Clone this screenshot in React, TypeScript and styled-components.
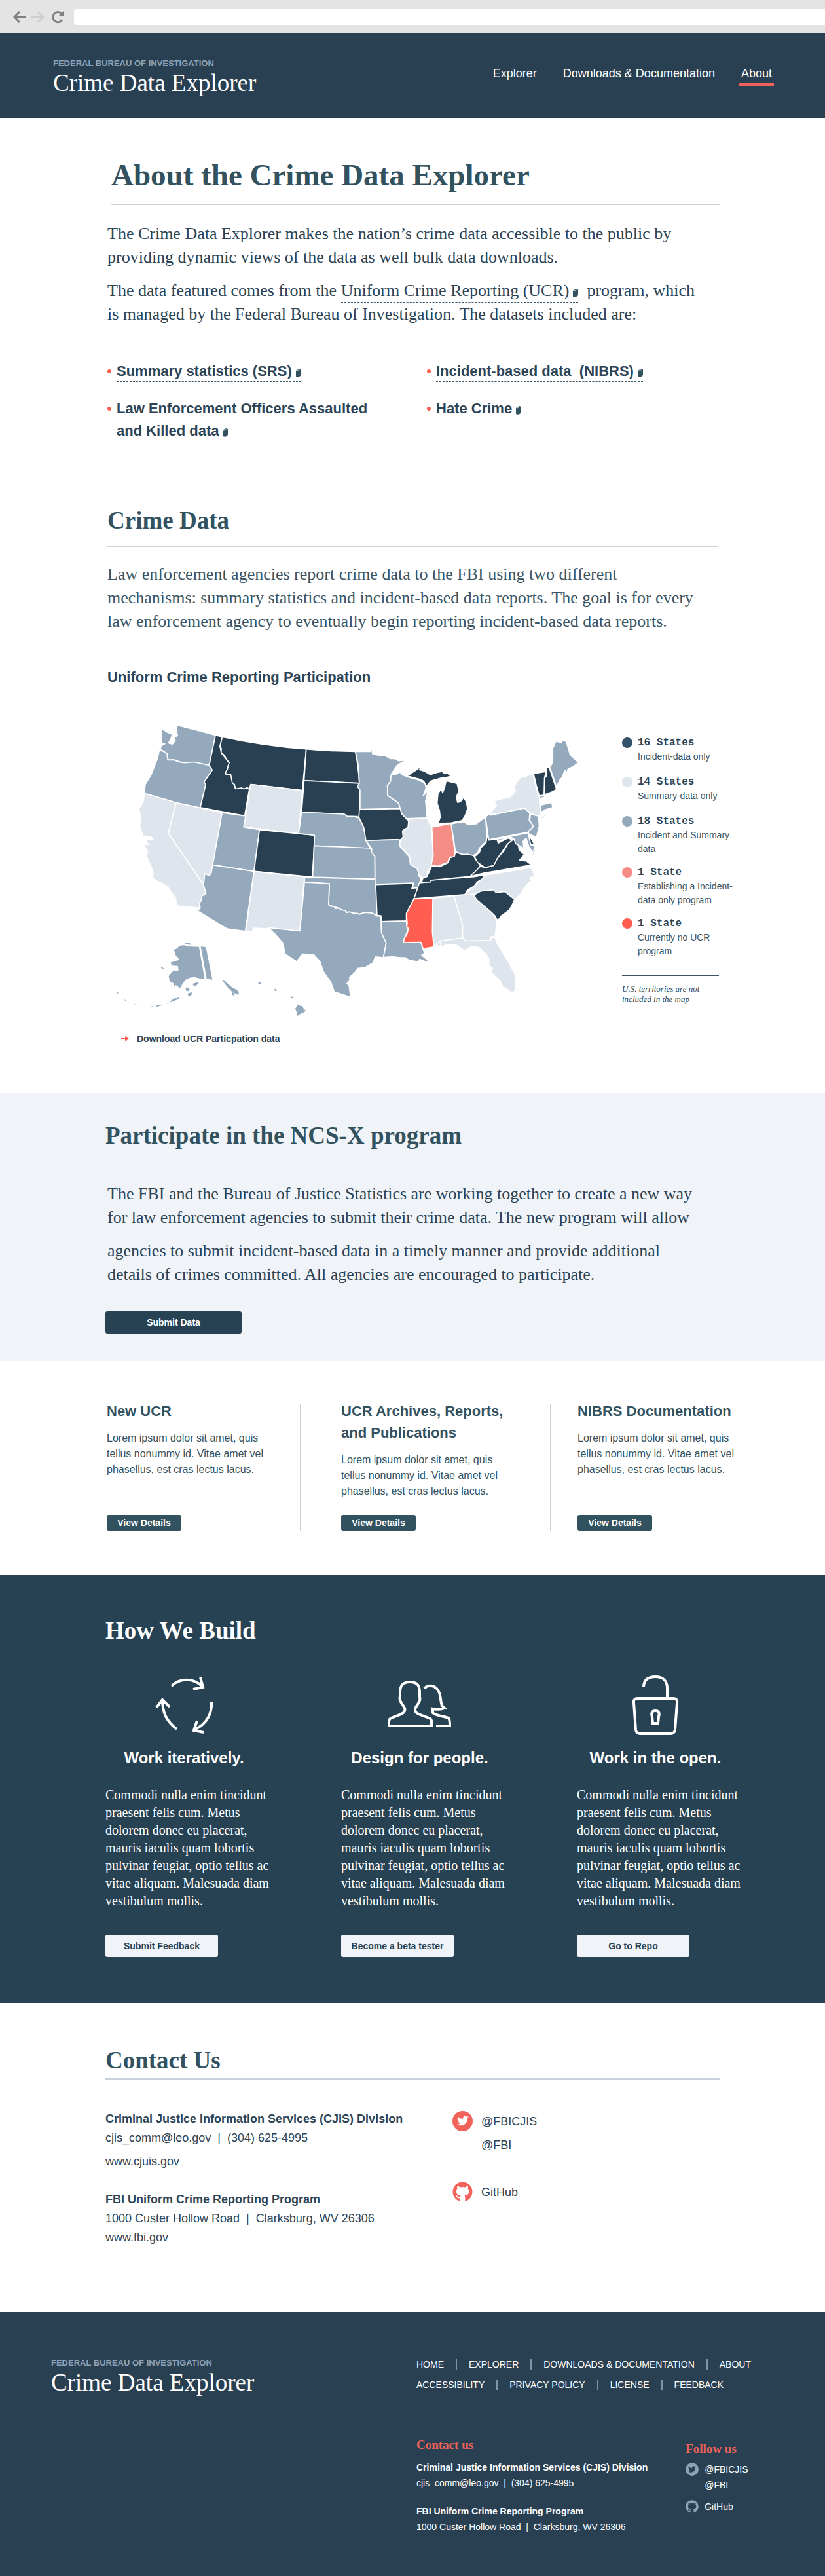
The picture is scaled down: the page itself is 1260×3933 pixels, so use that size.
import React from "react";
import styled, { createGlobalStyle } from "styled-components";
import { FaGithub, FaTwitter } from "react-icons/fa";

const color = {
  navy: "#294052",
  deep: "#264253",
  teal: "#33525f",
  ink: "#2c4456",
  mist: "#f0f3f8",
  rule: "#c9d2da",
  slate: "#95a9bd",
  pale: "#dfe5ed",
  coral: "#ff5e50",
  salmon: "#f38d86",
  accent: "#f0625a",
};

const sans = `"Liberation Sans", Arial, sans-serif`;
const serif = `"Liberation Serif", Georgia, serif`;
const mono = `"Liberation Mono", "Courier New", monospace`;

const GlobalStyle = createGlobalStyle`
  *, *::before, *::after { box-sizing: border-box; }
  body { margin: 0; background: #fff; color: ${color.ink}; font-family: ${sans}; }
  h1, h2, h3, h4, p, ul, figure, address { margin: 0; padding: 0; font-style: normal; }
  ul { list-style: none; }
  a { color: inherit; text-decoration: none; }
  svg { display: block; }
`;

/* Browser bar */
const Chrome = styled.div`
  display: flex;
  align-items: center;
  height: 51px;
  padding-left: 18px;
  background: #e4e4e4;
`;
const ChromeButton = styled.button<{ $faint?: boolean }>`
  display: flex;
  justify-content: center;
  width: 24px;
  padding: 0;
  margin-right: 4px;
  border: 0;
  background: none;
  color: ${(p) => (p.$faint ? "#cfcfcf" : "#808080")};
`;
const Reload = styled(ChromeButton)`
  margin: 0 13px 0 2px;
`;
const Address = styled.input`
  flex: 1;
  min-width: 0;
  height: 24px;
  padding: 0 8px;
  border: 0;
  border-radius: 4px 0 0 4px;
  background: #fff;
  font: 14px ${sans};
`;

/* Header */
const Header = styled.header`
  display: flex;
  justify-content: space-between;
  align-items: flex-start;
  height: 129px;
  padding: 38px 78px 0 81px;
  background: ${color.navy};
  color: #fff;
`;
const Eyebrow = styled.p`
  margin-bottom: 2px;
  color: #8fa3b8;
  font-size: 13px;
  font-weight: 700;
  line-height: 16px;
`;
const Wordmark = styled.a`
  display: block;
  font-family: ${serif};
  font-size: 37px;
  line-height: 40px;
`;
const Nav = styled.nav`
  display: flex;
  gap: 34px;
  margin-top: 11px;
`;
const NavLink = styled.a<{ $active?: boolean }>`
  padding: 0 3px 3px;
  border-bottom: 4px solid ${(p) => (p.$active ? color.accent : "transparent")};
  font-size: 18px;
  line-height: 24px;
`;

/* Shared layout and text */
const Section = styled.section<{ $top: number; $bottom: number; $bg?: string }>`
  padding: ${(p) => p.$top}px 20px ${(p) => p.$bottom}px;
  background: ${(p) => p.$bg ?? "transparent"};
`;
const Container = styled.div<{ $wide?: boolean }>`
  max-width: ${(p) => (p.$wide ? 938 : 932)}px;
  margin: 0 auto;
`;
const PageTitle = styled.h1`
  margin: 0 -4px 26px 6px;
  padding-bottom: 16px;
  border-bottom: 2px solid ${color.rule};
  color: ${color.teal};
  font: 700 47px/56px ${serif};
`;
const Heading = styled.h2<{ $line?: string; $pad?: number; $gap: number }>`
  margin-bottom: ${(p) => p.$gap}px;
  padding-bottom: ${(p) => p.$pad ?? 0}px;
  border-bottom: ${(p) => p.$line ?? "0"};
  color: ${color.teal};
  font: 700 37px/44px ${serif};
`;
const LightHeading = styled(Heading)`
  color: #fff;
`;
const Prose = styled.p<{ $tone?: string; $indent?: boolean }>`
  max-width: 920px;
  padding-left: ${(p) => (p.$indent ? 3 : 0)}px;
  color: ${(p) => p.$tone ?? color.ink};
  font: 26px/36px ${serif};
  & + & { margin-top: 15px; }
`;
const SmallHeading = styled.h3`
  margin: 52px 0 22px;
  color: ${color.ink};
  font-size: 22px;
  line-height: 30px;
`;
const DashedLink = styled.a`
  padding-bottom: 3px;
  border-bottom: 1px dashed #3b5568;
  svg { display: inline-block; margin-left: 6px; vertical-align: -2px; }
`;

const Datasets = styled.ul`
  display: grid;
  grid-template-columns: 488fr 444fr;
  row-gap: 23px;
  margin: 52px 0 98px;
  font-size: 22px;
  font-weight: 700;
  line-height: 34px;
`;
const Dataset = styled.li`
  display: flex;
  gap: 8px;
  max-width: 410px;
  &::before {
    content: "";
    flex: none;
    width: 6px;
    height: 6px;
    margin-top: 14px;
    border-radius: 50%;
    background: ${color.coral};
  }
`;

/* Map */
const Overhang = styled.div`
  margin-right: -34px;
`;
const MapLayout = styled(Overhang)`
  display: grid;
  grid-template-columns: minmax(0, 1fr) 180px;
  gap: 49px;
`;
const MapDrawing = styled.svg`
  width: 100%;
  height: auto;
  stroke: #fff;
  stroke-width: 5;
  stroke-linejoin: round;
`;
const Legend = styled.div`
  padding-top: 52px;
`;
const LegendList = styled.ul`
  display: flex;
  flex-direction: column;
  gap: 14px;
`;
const LegendItem = styled.li`
  display: flex;
  gap: 8px;
  min-height: 46px;
  font-size: 14px;
  line-height: 21px;
  color: #3b5564;
`;
const Dot = styled.span<{ $fill: string }>`
  flex: none;
  width: 16px;
  height: 16px;
  margin-top: 3px;
  border-radius: 50%;
  background: ${(p) => p.$fill};
`;
const Count = styled.strong`
  display: block;
  color: ${color.ink};
  font: 700 16px/22px ${mono};
`;
const LegendNote = styled.p`
  width: 148px;
  margin-top: 26px;
  padding-top: 12px;
  border-top: 1px solid #3b5568;
  font: italic 13px/16px ${serif};
`;
const Download = styled.a`
  display: inline-flex;
  align-items: center;
  gap: 12px;
  margin: 14px 0 0 21px;
  font-size: 14px;
  font-weight: 700;
  line-height: 20px;
`;

/* Buttons */
const Button = styled.button<{ $tone: "dark" | "teal" | "light" }>`
  width: ${(p) => ({ dark: 208, teal: 114, light: 172 })[p.$tone]}px;
  height: ${(p) => (p.$tone === "teal" ? 24 : 34)}px;
  padding: 0;
  border: 0;
  border-radius: 3px;
  background: ${(p) => ({ dark: color.deep, teal: color.teal, light: color.mist })[p.$tone]};
  color: ${(p) => (p.$tone === "light" ? color.deep : "#fff")};
  font: 700 14px/20px ${sans};
`;
const ProseAction = styled.div`
  display: flex;
  margin-top: 38px;
`;

/* Documentation cards */
const Cards = styled(Overhang)`
  display: grid;
  grid-template-columns: 297fr 2px 380fr 2px 291fr;
`;
const Card = styled.article<{ $inset?: number }>`
  display: flex;
  flex-direction: column;
  align-items: flex-start;
  padding-left: ${(p) => p.$inset ?? 0}px;
  color: ${color.teal};
  h3 { max-width: 270px; font-size: 22px; line-height: 33px; }
  p { max-width: 252px; margin: 13px 0 24px; font-size: 16px; line-height: 24px; }
  button { margin-top: auto; }
`;
const Divider = styled.span`
  margin-top: 6px;
  background: ${color.rule};
`;

/* How we build */
const Pillars = styled(Overhang)`
  display: grid;
  grid-template-columns: repeat(3, 252fr);
  column-gap: 108px;
`;
const Pillar = styled.article`
  color: #fff;
  p { margin: 27px 0 38px; font: 20px/27px ${serif}; }
`;
const PillarHead = styled.div`
  display: flex;
  flex-direction: column;
  align-items: center;
  gap: 18px;
  max-width: 240px;
  svg { fill: none; stroke: #fff; stroke-width: 4; height: 94px; }
  h3 { font-size: 24px; line-height: 32px; }
`;

/* Contact */
const ContactGrid = styled.div`
  display: grid;
  grid-template-columns: 530fr 408fr;
  font-size: 18px;
  line-height: 29px;
`;
const Orgs = styled.div<{ $gap: number }>`
  display: flex;
  flex-direction: column;
  gap: ${(p) => p.$gap}px;
`;
const Org = styled.address`
  strong, span, a { display: block; }
`;
const Spaced = styled.a`
  margin-top: 7px;
`;
const Social = styled.ul<{ $small?: boolean }>`
  display: flex;
  flex-direction: column;
  gap: ${(p) => (p.$small ? 9 : 36)}px;
  line-height: ${(p) => (p.$small ? 24 : 36)}px;
  li { display: flex; gap: ${(p) => (p.$small ? 9 : 13)}px; }
  a { display: block; }
`;
const Badge = styled.span<{ $size: number; $fill: string; $mark: string; $disc?: boolean }>`
  display: flex;
  align-items: center;
  justify-content: center;
  flex: none;
  width: ${(p) => p.$size}px;
  height: ${(p) => p.$size}px;
  margin-top: 2px;
  border-radius: 50%;
  background: ${(p) => (p.$disc ? p.$fill : "transparent")};
  color: ${(p) => (p.$disc ? p.$mark : p.$fill)};
`;

/* Footer */
const Footer = styled.footer`
  display: grid;
  grid-template-columns: 558fr 624fr;
  padding: 70px 0 65px 78px;
  background: ${color.navy};
  color: #fff;
`;
const FooterLinks = styled.ul`
  display: flex;
  font-size: 14px;
  line-height: 20px;
  & + & { margin-top: 11px; }
  li { display: flex; align-items: center; }
  li + li::before {
    content: "";
    width: 2px;
    height: 16px;
    margin: 0 18px;
    background: #7f93a8;
  }
`;
const FooterColumns = styled.div`
  display: flex;
  gap: 58px;
  margin-top: 70px;
  font-size: 14px;
  line-height: 24px;
`;
const FooterTitle = styled.h4`
  margin-bottom: 10px;
  color: ${color.accent};
  font: 700 19px/24px ${serif};
`;
const Follow = styled.div`
  padding-top: 6px;
  h4 { margin-bottom: 7px; }
`;

type Fill = "navy" | "slate" | "pale" | "salmon" | "coral";

const states: [string, Fill, string][] = [
  ["WA", "slate", "M330 108L507 154L478 292L440 284L410 277L395 280L385 277L365 281L340 275L318 267L290 268L285 238L270 228L255 220L255 212L265 198L275 194L258 190L260 160L257 122L285 140L308 150L305 165L292 190L310 195L322 180L320 165L333 155L328 135Z"],
  ["OR", "slate", "M250 222L270 229L285 240L288 268L318 268L340 277L365 281L410 277L478 292L492 314L470 345L455 368L462 380L437 487L327 463L182 420L185 380L210 340L240 265Z"],
  ["CA", "pale", "M182 421L327 463L291 602L452 838L463 878L443 905L433 935L437 945L330 935L325 900L300 870L290 850L265 833L245 825L218 808L222 780L205 740L190 705L197 685L183 665L185 650L200 655L188 640L195 630L222 630L210 620L185 620L178 620L160 570L165 530L156 492L175 462Z"],
  ["NV", "pale", "M327 463L537 509L494 748L487 785L478 797L458 787L452 838L291 602Z"],
  ["ID", "navy", "M507 154L538 162L527 205L533 235L570 282L552 332L576 332L598 398L640 398L662 398L640 523L437 485L462 380L455 368L492 314L478 292Z"],
  ["MT", "navy", "M538 162Q720 202 922 218L904 407L668 379L662 400L650 394L640 400L625 396L598 400L594 380L584 374L576 332L562 336L552 328L556 318L562 308L565 292L570 280L555 262L548 246L533 235L533 214L527 205Z"],
  ["WY", "pale", "M668 379L904 407L887 604L635 574Z"],
  ["UT", "slate", "M537 509L645 524L635 574L708 586L683 777L494 748Z"],
  ["CO", "navy", "M708 587L960 612L951 803L683 777Z"],
  ["AZ", "slate", "M494 748L683 777L643 1051L560 1040L425 958L437 945L433 925L443 905L445 890L463 878L452 838L458 787L478 797L487 785Z"],
  ["NM", "pale", "M683 777L914 803L893 1050L748 1035L750 1040L680 1037L676 1055L645 1051Z"],
  ["ND", "navy", "M922 218Q1030 228 1147 229L1153 262L1158 300L1163 340L1165 374L912 362Z"],
  ["SD", "navy", "M912 362L1165 374L1157 390L1168 405L1168 492L1163 530L1150 525L1135 527L1110 525L1095 515L901 507Z"],
  ["NE", "slate", "M901 507L1095 515L1110 526L1135 525L1163 533L1180 565L1190 600L1195 636L1215 672L958 660L960 612L887 604Z"],
  ["KS", "slate", "M958 660L1215 671L1222 688L1236 710L1236 813L951 803Z"],
  ["OK", "slate", "M914 803L951 805L1237 813L1245 890L1245 978L1220 968L1190 965L1165 973L1140 968L1100 962L1070 945L1045 938L1024 930L1028 833L914 827Z"],
  ["TX", "slate", "M914 827L1028 833L1024 930L1035 938L1048 937L1055 947L1070 945L1085 954L1100 956L1106 966L1120 962L1140 970L1155 968L1165 974L1190 965L1225 968L1245 982L1264 982L1266 1055L1288 1105L1275 1172L1238 1168L1228 1195L1190 1218L1160 1220L1142 1242L1120 1262L1122 1275L1108 1290L1118 1300L1125 1352L1050 1328L1035 1285L1000 1235L985 1190L955 1157L905 1155L878 1190L825 1155L815 1105L780 1065L748 1035L893 1050Z"],
  ["MN", "slate", "M1147 229L1215 229L1215 210L1220 210L1226 240L1260 248L1282 247L1308 262L1330 262L1345 272L1382 268L1340 290L1312 330L1308 365L1293 385L1295 430L1345 465L1352 490L1168 494L1168 405L1157 388L1165 374L1160 290Z"],
  ["IA", "navy", "M1165 494L1352 490L1360 515L1390 545L1388 575L1365 590L1368 620L1350 635L1335 632L1195 636L1185 575L1163 530Z"],
  ["MO", "slate", "M1195 636L1348 632L1352 665L1395 712L1402 745L1432 768L1438 800L1448 805L1440 830L1432 855L1408 855L1412 830L1237 836L1236 708L1220 690L1222 675Z"],
  ["AR", "navy", "M1240 838L1412 832L1405 855L1432 852L1425 880L1415 903L1395 940L1380 970L1380 1004L1266 1006L1264 980L1246 978Z"],
  ["LA", "slate", "M1266 1006L1380 1004L1382 1030L1390 1040L1370 1085L1367 1103L1447 1101L1458 1138L1465 1150L1450 1160L1480 1185L1476 1194L1450 1182L1440 1180L1436 1192L1420 1188L1390 1182L1375 1172L1350 1172L1320 1168L1275 1170L1288 1105L1266 1058Z"],
  ["AL", "pale", "M1501 900L1598 889L1637 1020L1638 1082L1533 1095L1540 1115L1525 1122L1520 1105L1512 1123L1506 1123L1499 1055Z"],
  ["GA", "pale", "M1598 889L1690 880L1700 905L1775 970L1795 1005L1785 1078L1768 1075L1766 1093L1648 1095L1638 1080L1637 1020Z"],
  ["FL", "pale", "M1533 1095L1638 1082L1648 1095L1766 1093L1770 1077L1785 1080L1800 1115L1840 1180L1878 1250L1882 1300L1876 1325L1862 1332L1845 1320L1820 1305L1810 1280L1795 1265L1768 1240L1774 1220L1758 1208L1757 1175L1745 1155L1710 1125L1680 1120L1650 1140L1635 1135L1610 1115L1570 1112L1540 1122Z"],
  ["MS", "coral", "M1415 903L1501 900L1499 1055L1506 1123L1475 1128L1458 1136L1447 1101L1367 1103L1370 1085L1382 1066L1390 1040L1382 1030L1384 1012L1380 970L1395 940Z"],
  ["NC", "pale", "M1740 795L1950 760L1968 795L1945 808L1955 820L1930 838L1905 878L1885 900L1875 905L1830 870L1790 875L1780 862L1720 868L1690 882L1648 883L1690 845Z"],
  ["SC", "navy", "M1690 885L1720 868L1780 862L1790 875L1830 870L1875 905L1862 935L1850 955L1815 980L1798 1003L1785 980L1770 965L1700 905Z"],
  ["TN", "navy", "M1440 830L1490 825L1492 818L1690 802L1740 793L1730 810L1705 825L1690 845L1660 862L1648 883L1415 902L1432 852Z"],
  ["KY", "navy", "M1450 827L1458 800L1480 790L1495 755L1520 752L1535 755L1570 738L1580 715L1600 708L1605 690L1640 700L1685 698L1695 720L1718 750L1700 780L1672 800L1490 818L1488 826Z"],
  ["VA", "navy", "M1672 800L1718 755L1745 760L1780 748L1795 718L1825 685L1845 650L1870 630L1892 655L1896 680L1920 700L1898 726L1930 730L1952 748L1740 784Z"],
  ["WV", "navy", "M1750 612L1757 634L1795 630L1800 648L1845 625L1865 632L1840 655L1820 685L1795 720L1780 750L1740 760L1705 735L1692 710L1715 690L1720 670L1745 645Z"],
  ["IL", "pale", "M1380 538L1475 535L1495 575L1503 700L1493 755L1475 780L1478 800L1455 808L1440 798L1430 765L1398 745L1395 710L1350 660L1352 635L1365 620L1362 592L1388 575L1392 545Z"],
  ["IN", "salmon", "M1497 575L1585 558L1602 690L1598 710L1580 712L1568 738L1545 745L1520 755L1508 748L1493 754L1503 705Z"],
  ["OH", "slate", "M1585 560L1640 550L1660 562L1700 560L1742 528L1748 610L1745 640L1715 670L1705 695L1685 705L1660 698L1640 700L1605 688Z"],
  ["WI", "slate", "M1310 337L1335 332L1352 323L1360 335L1385 345L1440 360L1465 375L1470 395L1457 432L1480 405L1468 455L1475 533L1380 536L1360 515L1352 490L1345 465L1295 430L1293 385L1308 365Z"],
  ["UP", "navy", "M1382 340L1400 330L1430 310L1449 293L1440 312L1460 318L1490 335L1520 325L1545 320L1550 328L1570 330L1585 342L1560 348L1540 350L1510 358L1490 365L1472 388L1460 365L1440 355Z"],
  ["MI", "navy", "M1562 363L1612 375L1620 410L1608 440L1615 462L1628 458L1642 438L1655 460L1660 490L1650 520L1635 545L1585 555L1525 558L1535 530L1532 500L1521 465L1525 420L1540 400L1546 418L1556 390Z"],
  ["PA", "slate", "M1742 528L1762 512L1766 520L1920 488L1945 510L1942 545L1962 570L1935 598L1757 632Z"],
  ["NY", "pale", "M1762 515L1792 475L1780 455L1820 445L1855 438L1880 408L1870 390L1900 350L1960 332L1975 400L1988 440L1994 515L1985 525L1950 512L1920 488L1768 518Z"],
  ["LI", "pale", "M1988 534L2025 512L2030 517L1996 540Z"],
  ["NJ", "slate", "M1948 515L1985 525L1988 570L1975 622L1940 605L1938 595L1962 572L1945 545Z"],
  ["MD", "slate", "M1795 630L1935 601L1955 657L1970 658L1960 690L1942 668L1928 625L1914 640L1918 672L1880 650L1872 628L1850 618L1800 640Z"],
  ["DE", "navy", "M1937 604L1966 653L1950 656Z"],
  ["VT", "navy", "M1962 330L2020 320L2012 350L2010 428L1988 432L1975 385Z"],
  ["NH", "navy", "M2022 302L2033 300L2067 402L2050 412L2013 426L2014 350L2022 340Z"],
  ["ME", "slate", "M2036 300L2050 280L2050 215L2065 180L2085 190L2100 177L2112 185L2130 245L2168 280L2140 300L2120 308L2114 325L2104 315L2095 345L2082 360L2067 390Z"],
  ["CT", "slate", "M1993 475L2045 462L2050 485L2015 495L1998 508Z"],
  ["AK", "slate", "M310 1135L330 1128L340 1115L365 1112L380 1118L433 1120L460 1272L430 1268L405 1262L385 1268L372 1275L360 1290L345 1315L325 1300L312 1308L312 1290L295 1285L290 1255L310 1232L335 1230L333 1212L305 1210L298 1192L338 1180L322 1162L320 1148Z"],
  ["AKe", "slate", "M436 1118L465 1122L496 1278L478 1270L465 1272Z"],
];

const islets = [
  "M365 1102L395 1108L390 1114L368 1108Z",
  "M538 1276L548 1278L580 1306L605 1320L613 1330L612 1342L600 1338L588 1330L595 1348L585 1342L580 1325L560 1305Z",
  "M400 1292L425 1284L430 1290L412 1304Z",
  "M372 1308L388 1312L384 1326L370 1322Z",
  "M382 1334L400 1330L396 1344L380 1348Z",
  "M252 1212L262 1214L272 1224L262 1222Z",
  "M300 1370L320 1358L342 1350L338 1360L318 1370L302 1376Z",
  "M234 1392L262 1386L258 1391L236 1397Z",
  "M278 1382L292 1376L290 1382Z",
  "M200 1396L222 1395L216 1399Z",
  "M135 1384L150 1388L146 1391Z",
  "M54 1328L62 1332L60 1338Z",
  "M90 1364L98 1367L94 1370Z",
  "M702 1288L710 1284L716 1288L712 1295L704 1293Z",
  "M772 1318L780 1314L782 1320L789 1322L782 1325Z",
  "M850 1348L856 1350L866 1354L854 1359Z",
  "M878 1384L888 1390L904 1394L912 1408L921 1414L910 1422L896 1428L882 1438L878 1428L877 1416L871 1404L880 1396Z",
  "M1962 686L1969 680L1960 702Z",
  "M1990 437L2012 432L2010 436L1992 441Z",
];

const Book = () => (
  <svg width="8" height="13" viewBox="0 0 8 13" aria-hidden="true">
    <path d="M0 3L5 0L8 1V10L4 13L0 12Z" fill={color.teal} />
    <path d="M1 3.5L5.5 1.5" stroke="#b8c6d0" strokeWidth="1" />
  </svg>
);

const UsMap = () => (
  <MapDrawing viewBox="12 0 2208 1470" role="img" aria-label="Participation by state">
    {states.map(([id, fill, d]) => (
      <path key={id} d={d} fill={fill === "navy" ? "#284052" : color[fill]} />
    ))}
    {islets.map((d) => (
      <path key={d} d={d} fill={color.slate} stroke="none" />
    ))}
  </MapDrawing>
);

const legend: [string, string, string][] = [
  ["#33506a", "16 States", "Incident-data only"],
  [color.pale, "14 States", "Summary-data only"],
  [color.slate, "18 States", "Incident and Summary data"],
  [color.salmon, "1 State", "Establishing a Incident-data only program"],
  [color.coral, "1 State", "Currently no UCR program"],
];

const cards: [string, number][] = [
  ["New UCR", 2],
  ["UCR Archives, Reports, and Publications", 61],
  ["NIBRS Documentation", 40],
];

const CycleIcon = () => (
  <svg width="90" height="94" viewBox="0 -2 90 94" aria-hidden="true">
    <path d="M26 16C38 4 60 3 73 17M70 3L74 18L59 21" />
    <path d="M34 82C18 70 12 56 12 37M3 49L12 37L23 48" />
    <path d="M87 41C88 58 80 74 61 83M65 69L60 84L75 87" />
  </svg>
);
const PeopleIcon = () => (
  <svg width="98" height="94" viewBox="0 -8 98 94" aria-hidden="true">
    <path d="M34 4C22 4 19 11 19 20V26C17 32 21 36 23 39C26 43 28 46 25 50C22 54 8 57 4 60C1 62 2 65 2 71H67C67 65 68 62 65 60C60 57 46 54 43 50C41 47 43 42 46 38C49 34 50 30 49 27V20C49 10 46 4 34 4Z" />
    <path d="M56 14C60 9 68 8 74 13C82 20 80 32 83 40L87 44C82 46 74 46 69 45V51C72 55 85 56 93 59C95 61 95 66 95 71H74" />
  </svg>
);
const LockIcon = () => (
  <svg width="78" height="94" viewBox="0 1 78 94" aria-hidden="true">
    <path d="M12 38H66Q73 38 72 45L69 86Q68 92 62 92H16Q10 92 9 86L6 45Q5 38 12 38Z" />
    <path d="M21 21C21 9 29 5 39 5C51 5 57 12 57 22V37" />
    <path d="M35 76L34 66C32 60 34 57 39 57C44 57 46 60 44 66L43 76Z" />
  </svg>
);

const pillars: [React.FC, string, string][] = [
  [CycleIcon, "Work iteratively.", "Submit Feedback"],
  [PeopleIcon, "Design for people.", "Become a beta tester"],
  [LockIcon, "Work in the open.", "Go to Repo"],
];

const Brand = () => (
  <div>
    <Eyebrow>FEDERAL BUREAU OF INVESTIGATION</Eyebrow>
    <Wordmark href="#home">Crime Data Explorer</Wordmark>
  </div>
);

export default function App() {
  return (
    <>
      <GlobalStyle />
      <Chrome>
        <ChromeButton type="button" aria-label="Back">
          <svg width="20" height="18" viewBox="0 0 20 18" fill="none" stroke="currentColor" strokeWidth="3">
            <path d="M10 1L2 9L10 17M2 9H20" />
          </svg>
        </ChromeButton>
        <ChromeButton type="button" aria-label="Forward" $faint>
          <svg width="20" height="18" viewBox="0 0 20 18" fill="none" stroke="currentColor" strokeWidth="3">
            <path d="M10 1L18 9L10 17M18 9H0" />
          </svg>
        </ChromeButton>
        <Reload type="button" aria-label="Reload">
          <svg width="20" height="20" viewBox="0 0 20 20" fill="none" stroke="currentColor" strokeWidth="3">
            <path d="M17 14A7.6 7.6 0 1 1 16 5" />
            <path d="M19 1V9H11Z" fill="currentColor" stroke="none" />
          </svg>
        </Reload>
        <Address type="text" aria-label="Address" />
      </Chrome>

      <Header>
        <Brand />
        <Nav>
          <NavLink href="#explorer">Explorer</NavLink>
          <NavLink href="#downloads">Downloads &amp; Documentation</NavLink>
          <NavLink href="#about" $active>About</NavLink>
        </Nav>
      </Header>

      <main>
        <Section $top={59} $bottom={73}>
          <Container>
            <PageTitle>About the Crime Data Explorer</PageTitle>
            <Prose>
              The Crime Data Explorer makes the nation’s crime data accessible to the public by
              providing dynamic views of the data as well bulk data downloads.
            </Prose>
            <Prose>
              The data featured comes from the{" "}
              <DashedLink href="#ucr">Uniform Crime Reporting (UCR)<Book /></DashedLink>
              {" \u00a0"}program, which is managed by the Federal Bureau of Investigation. The
              datasets included are:
            </Prose>
            <Datasets>
              <Dataset>
                <span><DashedLink href="#srs">Summary statistics (SRS)<Book /></DashedLink></span>
              </Dataset>
              <Dataset>
                <span><DashedLink href="#nibrs">Incident-based data &nbsp;(NIBRS)<Book /></DashedLink></span>
              </Dataset>
              <Dataset>
                <span>
                  <DashedLink href="#leoka">Law Enforcement Officers Assaulted and Killed data<Book /></DashedLink>
                </span>
              </Dataset>
              <Dataset>
                <span><DashedLink href="#hate-crime">Hate Crime<Book /></DashedLink></span>
              </Dataset>
            </Datasets>

            <Heading $line={`2px solid ${color.rule}`} $pad={16} $gap={24}>Crime Data</Heading>
            <Prose $tone="#3a5564">
              Law enforcement agencies report crime data to the FBI using two different
              mechanisms: summary statistics and incident-based data reports. The goal is for every
              law enforcement agency to eventually begin reporting incident-based data reports.
            </Prose>
            <SmallHeading>Uniform Crime Reporting Participation</SmallHeading>
            <MapLayout>
              <UsMap />
              <Legend>
                <LegendList>
                  {legend.map(([fill, count, text]) => (
                    <LegendItem key={text}>
                      <Dot $fill={fill} />
                      <div>
                        <Count>{count}</Count>
                        {text}
                      </div>
                    </LegendItem>
                  ))}
                </LegendList>
                <LegendNote>U.S. territories are not included in the map</LegendNote>
              </Legend>
            </MapLayout>
            <Download href="#download">
              <svg width="12" height="8" viewBox="0 0 12 8" aria-hidden="true">
                <path d="M0 3H6V0L12 4L6 8V5H0Z" fill={color.coral} />
              </svg>
              Download UCR Particpation data
            </Download>
          </Container>
        </Section>

        <Section $top={43} $bottom={42} $bg={color.mist}>
          <Container $wide>
            <Heading $line="1px solid #d4706e" $pad={16} $gap={32}>
              Participate in the NCS-X program
            </Heading>
            <Prose $indent>
              The FBI and the Bureau of Justice Statistics are working together to create a new way
              for law enforcement agencies to submit their crime data. The new program will allow
            </Prose>
            <Prose $indent>
              agencies to submit incident-based data in a timely manner and provide additional
              details of crimes committed. All agencies are encouraged to participate.
            </Prose>
            <ProseAction>
              <Button type="button" $tone="dark">Submit Data</Button>
            </ProseAction>
          </Container>
        </Section>

        <Section $top={60} $bottom={68}>
          <Container $wide>
            <Cards>
              {cards.map(([title, inset], i) => (
                <React.Fragment key={title}>
                  {i > 0 && <Divider />}
                  <Card $inset={inset}>
                    <h3>{title}</h3>
                    <p>
                      Lorem ipsum dolor sit amet, quis tellus nonummy id. Vitae amet vel phasellus,
                      est cras lectus lacus.
                    </p>
                    <Button type="button" $tone="teal">View Details</Button>
                  </Card>
                </React.Fragment>
              ))}
            </Cards>
          </Container>
        </Section>

        <Section $top={63} $bottom={70} $bg={color.deep}>
          <Container $wide>
            <LightHeading $gap={44}>How We Build</LightHeading>
            <Pillars>
              {pillars.map(([Icon, title, action]) => (
                <Pillar key={title}>
                  <PillarHead>
                    <Icon />
                    <h3>{title}</h3>
                  </PillarHead>
                  <p>
                    Commodi nulla enim tincidunt praesent felis cum. Metus dolorem donec eu
                    placerat, mauris iaculis quam lobortis pulvinar feugiat, optio tellus ac vitae
                    aliquam. Malesuada diam vestibulum mollis.
                  </p>
                  <Button type="button" $tone="light">{action}</Button>
                </Pillar>
              ))}
            </Pillars>
          </Container>
        </Section>

        <Section $top={66} $bottom={99}>
          <Container $wide>
            <Heading $line={`2px solid ${color.rule}`} $pad={5} $gap={46}>Contact Us</Heading>
            <ContactGrid>
              <Orgs $gap={29}>
                <Org>
                  <strong>Criminal Justice Information Services (CJIS) Division</strong>
                  <span>cjis_comm@leo.gov &nbsp;|&nbsp; (304) 625-4995</span>
                  <Spaced href="#cjis">www.cjuis.gov</Spaced>
                </Org>
                <Org>
                  <strong>FBI Uniform Crime Reporting Program</strong>
                  <span>1000 Custer Hollow Road &nbsp;|&nbsp; Clarksburg, WV 26306</span>
                  <a href="#fbi">www.fbi.gov</a>
                </Org>
              </Orgs>
              <Social>
                <li>
                  <Badge $size={31} $fill={color.accent} $mark="#fff" $disc><FaTwitter size={18} /></Badge>
                  <div>
                    <a href="#fbicjis">@FBICJIS</a>
                    <a href="#fbi-twitter">@FBI</a>
                  </div>
                </li>
                <li>
                  <Badge $size={31} $fill={color.accent} $mark="#fff"><FaGithub size={31} /></Badge>
                  <a href="#github">GitHub</a>
                </li>
              </Social>
            </ContactGrid>
          </Container>
        </Section>
      </main>

      <Footer>
        <Brand />
        <div>
          <FooterLinks>
            <li><a href="#home">HOME</a></li>
            <li><a href="#explorer">EXPLORER</a></li>
            <li><a href="#downloads">DOWNLOADS &amp; DOCUMENTATION</a></li>
            <li><a href="#about">ABOUT</a></li>
          </FooterLinks>
          <FooterLinks>
            <li><a href="#accessibility">ACCESSIBILITY</a></li>
            <li><a href="#privacy">PRIVACY POLICY</a></li>
            <li><a href="#license">LICENSE</a></li>
            <li><a href="#feedback">FEEDBACK</a></li>
          </FooterLinks>
          <FooterColumns>
            <div>
              <FooterTitle>Contact us</FooterTitle>
              <Orgs $gap={19}>
                <Org>
                  <strong>Criminal Justice Information Services (CJIS) Division</strong>
                  <span>cjis_comm@leo.gov &nbsp;|&nbsp; (304) 625-4995</span>
                </Org>
                <Org>
                  <strong>FBI Uniform Crime Reporting Program</strong>
                  <span>1000 Custer Hollow Road &nbsp;|&nbsp; Clarksburg, WV 26306</span>
                </Org>
              </Orgs>
            </div>
            <Follow>
              <FooterTitle>Follow us</FooterTitle>
              <Social $small>
                <li>
                  <Badge $size={20} $fill="#8fa3b8" $mark={color.navy} $disc><FaTwitter size={12} /></Badge>
                  <div>
                    <a href="#fbicjis">@FBICJIS</a>
                    <a href="#fbi-twitter">@FBI</a>
                  </div>
                </li>
                <li>
                  <Badge $size={20} $fill="#8fa3b8" $mark={color.navy}><FaGithub size={20} /></Badge>
                  <a href="#github">GitHub</a>
                </li>
              </Social>
            </Follow>
          </FooterColumns>
        </div>
      </Footer>
    </>
  );
}
